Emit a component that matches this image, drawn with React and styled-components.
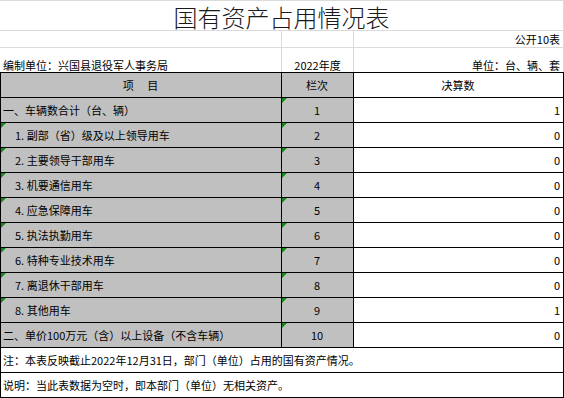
import styled, { createGlobalStyle, css } from 'styled-components';

const GlobalStyle = createGlobalStyle`
  html, body {
    margin: 0;
    padding: 0;
    background: #fff;
  }
`;

const rows = [
  { name: '一、车辆数合计（台、辆）', no: 1, value: 1, sub: false },
  { name: '1. 副部（省）级及以上领导用车', no: 2, value: 0, sub: true },
  { name: '2. 主要领导干部用车', no: 3, value: 0, sub: true },
  { name: '3. 机要通信用车', no: 4, value: 0, sub: true },
  { name: '4. 应急保障用车', no: 5, value: 0, sub: true },
  { name: '5. 执法执勤用车', no: 6, value: 0, sub: true },
  { name: '6. 特种专业技术用车', no: 7, value: 0, sub: true },
  { name: '7. 离退休干部用车', no: 8, value: 0, sub: true },
  { name: '8. 其他用车', no: 9, value: 1, sub: true },
  { name: '二、单价100万元（含）以上设备（不含车辆）', no: 10, value: 0, sub: false },
];

export default function App () {
  return (
    <>
      <GlobalStyle />
      <Sheet>
        <TitleRow>国有资产占用情况表</TitleRow>
        <InfoRow $height={17}>
          <InfoCell $width={282} />
          <InfoCell $width={72} />
          <InfoCell $width={210} $align="right">公开10表</InfoCell>
        </InfoRow>
        <InfoRow $height={24} $last>
          <InfoCell $width={282} $bottom>编制单位：兴国县退役军人事务局</InfoCell>
          <InfoCell $width={72} $align="center" $bottom>2022年度</InfoCell>
          <InfoCell $width={210} $align="right" $bottom>单位：台、辆、套</InfoCell>
        </InfoRow>

        <Row $head>
          <Cell $width={282} $first $gray $align="center">项{'\u3000\u00a0'}目</Cell>
          <Cell $width={72} $gray $align="center">栏次</Cell>
          <Cell $width={210} $align="center">决算数</Cell>
        </Row>
        {rows.map(({ name, no, value, sub }) => (
          <Row key={no}>
            <Cell $width={282} $first $gray $flag={sub} $indent={sub}>{name}</Cell>
            <Cell $width={72} $gray $flag $align="center">{no}</Cell>
            <Cell $width={210} $align="right">{value}</Cell>
          </Row>
        ))}
        <Row>
          <Cell $width={564} $first>注：本表反映截止2022年12月31日，部门（单位）占用的国有资产情况。</Cell>
        </Row>
        <Row>
          <Cell $width={564} $first>说明：当此表数据为空时，即本部门（单位）无相关资产。</Cell>
        </Row>
      </Sheet>
    </>
  );
}

const Sheet = styled.div`
  width: 564px;
  font-family: "Noto Sans CJK SC", "Liberation Sans", sans-serif;
  font-size: 11px;
  color: #000;
  background: #fff;
`;

const TitleRow = styled.div`
  box-sizing: border-box;
  height: 31px;
  border-top: 1px solid #dadada;
  border-bottom: 1px solid #dadada;
  border-right: 1px solid #dadada;
  display: flex;
  align-items: center;
  justify-content: center;
  font-size: 24px;
  font-weight: 300;
  letter-spacing: 0;
  color: #1a1a1a;
  line-height: 1;
  padding-top: 2px;
`;

const InfoRow = styled.div`
  display: flex;
  height: ${(p) => p.$height}px;
  box-sizing: border-box;
  ${(p) =>
    !p.$last &&
    css`
      border-bottom: 1px solid #dadada;
    `}
`;

const InfoCell = styled.div`
  box-sizing: border-box;
  width: ${(p) => p.$width}px;
  border-right: 1px solid #dadada;
  display: flex;
  align-items: ${(p) => (p.$bottom ? 'flex-end' : 'center')};
  justify-content: ${(p) =>
    p.$align === 'right' ? 'flex-end' : p.$align === 'center' ? 'center' : 'flex-start'};
  padding: 0 3px 0 3px;
  white-space: nowrap;
  overflow: hidden;
  line-height: 13px;
`;

const Row = styled.div`
  display: flex;
  box-sizing: border-box;
  height: ${(p) => (p.$head ? 26 : 25)}px;
  border-bottom: 1px solid #000;
  ${(p) =>
    p.$head &&
    css`
      border-top: 1px solid #000;
      background: #c0c0c0;
    `}
`;

const Cell = styled.div`
  position: relative;
  box-sizing: border-box;
  width: ${(p) => p.$width}px;
  border-right: 1px solid #000;
  ${(p) =>
    p.$first &&
    css`
      border-left: 1px solid #000;
    `}
  background: ${(p) => (p.$gray ? '#c0c0c0' : '#fff')};
  display: flex;
  align-items: center;
  justify-content: ${(p) =>
    p.$align === 'right' ? 'flex-end' : p.$align === 'center' ? 'center' : 'flex-start'};
  padding: 0 3px 0 ${(p) => (p.$indent ? 14 : 2)}px;
  white-space: nowrap;
  overflow: hidden;
  line-height: 13px;

  ${(p) =>
    p.$flag &&
    css`
      &::before {
        content: '';
        position: absolute;
        top: 0;
        left: 0;
        border-top: 5px solid #138a13;
        border-right: 5px solid transparent;
      }
    `}
`;
